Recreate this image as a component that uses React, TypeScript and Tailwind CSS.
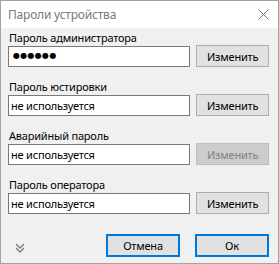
import React from 'react';

interface PasswordRow {
  id: string;
  label: string;
  value: string;
  masked?: boolean;
  disabled?: boolean;
}

const ROWS: PasswordRow[] = [
  { id: 'admin', label: 'Пароль администратора', value: '●●●●●●', masked: true },
  { id: 'adjust', label: 'Пароль юстировки', value: 'не используется' },
  { id: 'emergency', label: 'Аварийный пароль', value: 'не используется', disabled: true },
  { id: 'operator', label: 'Пароль оператора', value: 'не используется' },
];

const App: React.FC = () => {
  return (
    <div
      className="w-[279px] h-[264px] flex flex-col border border-[#a3a3a3] bg-[#f0f0f0] text-[11px] tracking-[-0.2px] text-black overflow-hidden"
      style={{ fontFamily: '"Noto Sans", "Open Sans", sans-serif' }}
    >
      {/* title bar */}
      <div className="h-[27px] shrink-0 bg-white flex items-center justify-between pl-[7px] pr-[9px]">
        <span className="text-[12px] text-[#7a7a7a] leading-none">Пароли устройства</span>
        <svg width="11" height="11" viewBox="0 0 11 11" aria-hidden>
          <path d="M0.5 0.5 L10.5 10.5 M10.5 0.5 L0.5 10.5" stroke="#6f6f6f" strokeWidth="1" />
        </svg>
      </div>

      <div className="flex flex-col pl-[7px] pr-[9px] pt-[3px]">
        {ROWS.map((row) => (
          <section key={row.id} className="flex flex-col mb-[13px]">
            <label className="h-[14px] leading-[14px] pl-[1px]">{row.label}</label>
            <div className="flex items-center gap-[6px] h-[22px]">
              <div className="w-[183px] h-[21px] border border-[#7a7a7a] bg-white flex items-center pl-[2px] overflow-hidden">
                {row.masked ? (
                  <span className="text-[8px] tracking-[0.3px] pl-[2px] leading-none" style={{ fontFamily: '"DejaVu Sans", sans-serif' }}>
                    {row.value}
                  </span>
                ) : (
                  <span className="leading-none">{row.value}</span>
                )}
              </div>
              <button
                disabled={row.disabled}
                className={
                  row.disabled
                    ? 'w-[73px] h-[22px] border border-[#bfbfbf] bg-[#cccccc] text-[#838383] leading-none'
                    : 'w-[73px] h-[22px] border border-[#adadad] bg-[#e1e1e1] text-black leading-none'
                }
              >
                Изменить
              </button>
            </div>
          </section>
        ))}
      </div>

      <div className="flex items-center pl-[14px] pr-[9px] mt-[7px]">
        <svg width="10" height="11" viewBox="0 0 10 11" aria-hidden className="mt-[5px]">
          <path d="M1 1 L5 5 L9 1 M1 5 L5 9 L9 5" stroke="#7a7a7a" strokeWidth="1.3" fill="none" />
        </svg>
        <div className="ml-auto flex gap-[15px]">
          <button className="w-[74px] h-[23px] border-2 border-[#0078d7] bg-[#e1e1e1] leading-none">Отмена</button>
          <button className="w-[74px] h-[23px] border-2 border-[#0078d7] bg-[#e1e1e1] leading-none">Ок</button>
        </div>
      </div>
    </div>
  );
};

export default App;
